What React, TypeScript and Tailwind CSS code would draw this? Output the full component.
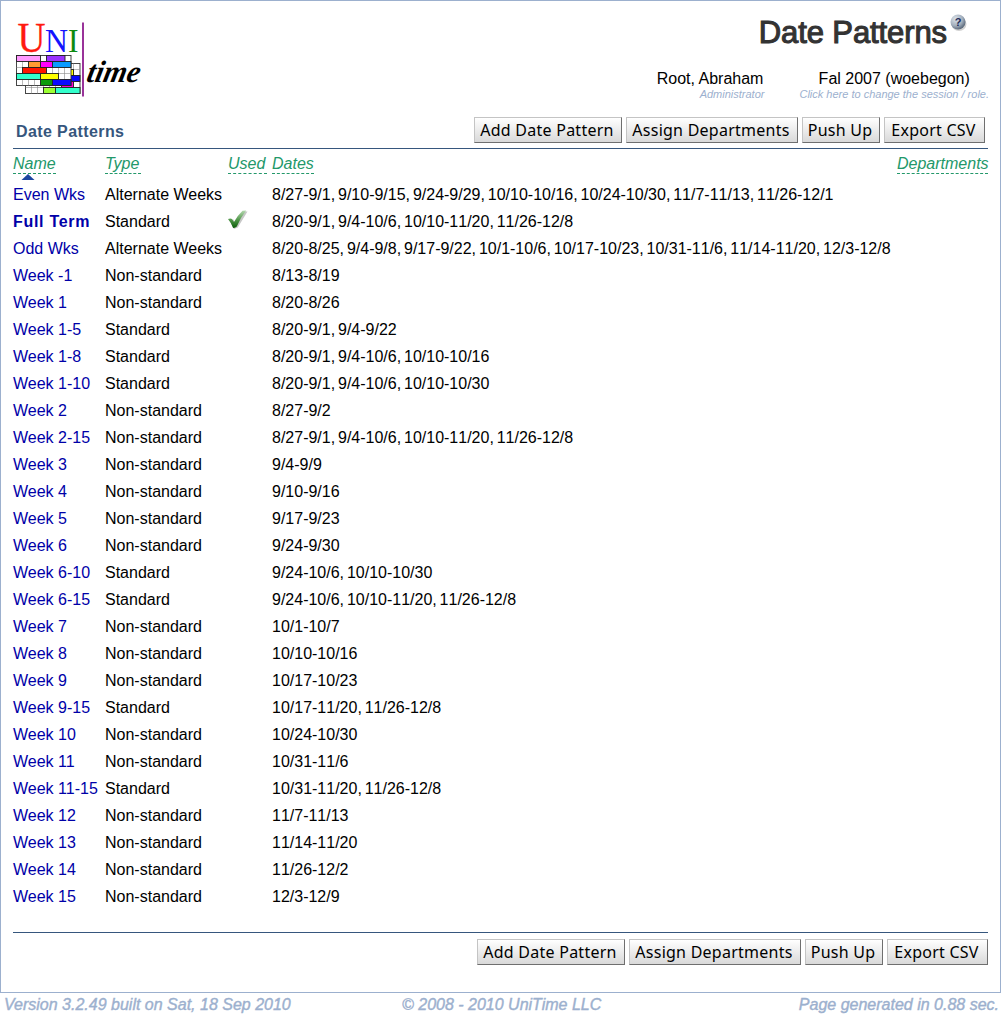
import React from "react";

type Row = [name: string, type: string, dates: string];

const NS = "Non-standard";
const ST = "Standard";
const ROWS: Row[] = [
  ["Even Wks", "Alternate Weeks", "8/27-9/1, 9/10-9/15, 9/24-9/29, 10/10-10/16, 10/24-10/30, 11/7-11/13, 11/26-12/1"],
  ["Full Term", ST, "8/20-9/1, 9/4-10/6, 10/10-11/20, 11/26-12/8"],
  ["Odd Wks", "Alternate Weeks", "8/20-8/25, 9/4-9/8, 9/17-9/22, 10/1-10/6, 10/17-10/23, 10/31-11/6, 11/14-11/20, 12/3-12/8"],
  ["Week -1", NS, "8/13-8/19"],
  ["Week 1", NS, "8/20-8/26"],
  ["Week 1-5", ST, "8/20-9/1, 9/4-9/22"],
  ["Week 1-8", ST, "8/20-9/1, 9/4-10/6, 10/10-10/16"],
  ["Week 1-10", ST, "8/20-9/1, 9/4-10/6, 10/10-10/30"],
  ["Week 2", NS, "8/27-9/2"],
  ["Week 2-15", NS, "8/27-9/1, 9/4-10/6, 10/10-11/20, 11/26-12/8"],
  ["Week 3", NS, "9/4-9/9"],
  ["Week 4", NS, "9/10-9/16"],
  ["Week 5", NS, "9/17-9/23"],
  ["Week 6", NS, "9/24-9/30"],
  ["Week 6-10", ST, "9/24-10/6, 10/10-10/30"],
  ["Week 6-15", ST, "9/24-10/6, 10/10-11/20, 11/26-12/8"],
  ["Week 7", NS, "10/1-10/7"],
  ["Week 8", NS, "10/10-10/16"],
  ["Week 9", NS, "10/17-10/23"],
  ["Week 9-15", ST, "10/17-11/20, 11/26-12/8"],
  ["Week 10", NS, "10/24-10/30"],
  ["Week 11", NS, "10/31-11/6"],
  ["Week 11-15", ST, "10/31-11/20, 11/26-12/8"],
  ["Week 12", NS, "11/7-11/13"],
  ["Week 13", NS, "11/14-11/20"],
  ["Week 14", NS, "11/26-12/2"],
  ["Week 15", NS, "12/3-12/9"],
];

/* x, y, width, height, fill */
type Block = [number, number, number, number, string];
const BACK_BLOCKS: Block[] = [
  [64, 69, 9, 6, "#ffff00"],
  [64, 75, 15.5, 6, "#0a0aff"],
  [61, 81, 12, 6, "#ff00d4"],
  [43, 87, 12, 6, "#9bff33"],
  [55, 87, 24.5, 6, "#33ffcc"],
];
const FRONT_BLOCKS: Block[] = [
  [16, 55, 24, 6, "#ff99ff"],
  [46, 55, 18.5, 6, "#9b33ff"],
  [28, 61, 12, 6, "#ff9b33"],
  [40, 61, 12, 6, "#ff00ff"],
  [52, 61, 18.5, 6, "#0a9bff"],
  [22, 67, 24, 6, "#ff1400"],
  [16, 73, 24, 6, "#33ffcc"],
  [40, 73, 18, 6, "#ffff00"],
  [40, 79, 12, 6, "#0a9b0a"],
  [52, 79, 18.5, 6, "#0a0aff"],
];

function Grid({ x, y, cols, rows }: { x: number; y: number; cols: number; rows: number }) {
  return (
    <g stroke="#8a8a8a" strokeWidth="0.6">
      <rect x={x} y={y} width={cols * 6 + 0.5} height={rows * 6} fill="#fff" stroke="#333" strokeWidth="0.9" />
      {Array.from({ length: cols - 1 }, (_, i) => (
        <path key={"c" + i} d={`M${x + 6 * (i + 1)} ${y}v${rows * 6}`} />
      ))}
      {Array.from({ length: rows - 1 }, (_, i) => (
        <path key={"r" + i} d={`M${x} ${y + 6 * (i + 1)}h${cols * 6}`} />
      ))}
    </g>
  );
}

function Logo() {
  const block = ([x, y, w, h, f]: Block, i: number) => (
    <rect key={i} x={x} y={y} width={w} height={h} fill={f} stroke="#222" strokeWidth="0.9" />
  );
  return (
    <svg width="134" height="98" viewBox="12.5 0.5 134 98" className="block" fontFamily="Liberation Serif, serif">
      <text x="17" y="51" fontSize="42" fill="#ff1a10" stroke="#ff1a10" strokeWidth="0.3" textLength="28" lengthAdjust="spacingAndGlyphs">U</text>
      <text x="44.5" y="51" fontSize="33" fill="#1414ff" textLength="23" lengthAdjust="spacingAndGlyphs">N</text>
      <text x="67.5" y="51" fontSize="33" fill="#0f8a0f" textLength="10.5" lengthAdjust="spacingAndGlyphs">I</text>
      <Grid x={25} y={63} cols={9} rows={5} />
      {BACK_BLOCKS.map(block)}
      <Grid x={16} y={55} cols={9} rows={5} />
      {FRONT_BLOCKS.map(block)}
      <path d="M82.500 22v74" stroke="#993399" strokeWidth="2" />
      <text transform="translate(85 81.500) skewX(-12)" fontSize="31" fontStyle="italic" fontWeight="bold" fill="#000" textLength="53" lengthAdjust="spacingAndGlyphs">time</text>
    </svg>
  );
}

function HelpIcon() {
  return (
    <svg width="18" height="18" viewBox="0 0 18 18" className="mt-px ml-[3px] block">
      <defs>
        <radialGradient id="ball" cx="0.35" cy="0.3" r="0.75">
          <stop offset="0" stopColor="#dde4ea" />
          <stop offset="0.6" stopColor="#a3afbd" />
          <stop offset="1" stopColor="#536173" />
        </radialGradient>
      </defs>
      <ellipse cx="9" cy="10" rx="7.500" ry="7" fill="#000" opacity="0.18" />
      <circle cx="8" cy="8" r="7.500" fill="url(#ball)" />
      <text x="8" y="11.500" fontSize="11" fontWeight="bold" textAnchor="middle" fill="#1d2b58" fontFamily="Liberation Sans, sans-serif">?</text>
    </svg>
  );
}

function Check() {
  return (
    <svg width="20" height="20" viewBox="0 0 20 20" className="block">
      <defs>
        <linearGradient id="tick" x1="0" y1="0" x2="0" y2="1">
          <stop offset="0" stopColor="#b5d8b0" />
          <stop offset="0.55" stopColor="#4f9648" />
          <stop offset="1" stopColor="#0b5c08" />
        </linearGradient>
      </defs>
      <path d="M1.500 10.500 5.500 9.500 7 13 17 1.500 19.500 1.500 9.800 17.500 6 19Z" fill="#000" opacity="0.22" />
      <path d="M0 9Q2.500 7.800 4 9L6 12Q10 5 14.500 0.800L18.200 0.500Q12.500 7.500 8.800 16.500Q7 18.200 5 17.800Q3 12.500 0 9Z" fill="url(#tick)" />
    </svg>
  );
}

function Buttons() {
  const base =
    "h-[26px] border border-t-[#c4c4c4] border-l-[#c4c4c4] border-r-[#6f6f6f] border-b-[#6f6f6f] bg-linear-to-b from-white to-[#d9d9d9] pr-[2px] text-center font-['Noto_Sans','Open_Sans',sans-serif] text-[16px] leading-[24px] text-black whitespace-nowrap tracking-[0.25px]";
  return (
    <div className="flex gap-1">
      <button className={base + " w-[148px]"}>Add Date Pattern</button>
      <button className={base + " w-[172px]"}>Assign Departments</button>
      <button className={base + " w-[78px]"}>Push Up</button>
      <button className={base + " w-[101px]"}>Export CSV</button>
    </div>
  );
}

const head = "border-b border-dashed border-[#23986a] h-[21px] leading-[22px]";

export default function App() {
  return (
    <div className="h-[1016px] w-[1001px] overflow-hidden bg-white font-['Liberation_Sans',Arial,sans-serif] text-[16px] text-black">
      <div className="flex h-[993px] flex-col border border-[#9cb0ce] pr-3 pl-3">
        <header className="flex h-[107px] justify-between">
          <Logo />
          <div className="flex flex-col items-end">
            <div className="flex h-[68px] items-start pt-[12px] pr-[20px]">
              <h1 className="mt-[2px] text-[31px] leading-9 tracking-[-0.1px] text-[#333] [-webkit-text-stroke:1.1px_#333]">Date Patterns</h1>
              <HelpIcon />
            </div>
            <div className="-mr-px flex gap-[35px]">
              <div className="text-right">
                <div className="pr-px leading-[19px]">Root, Abraham</div>
                <div className="text-[11px] leading-[13px] text-[#9cb0ce] italic">Administrator</div>
              </div>
              <div className="text-center">
                <div className="leading-[19px]">Fal 2007 (woebegon)</div>
                <div className="text-[11px] leading-[13px] text-[#9cb0ce] italic">Click here to change the session / role.</div>
              </div>
            </div>
          </div>
        </header>

        <div className="flex h-[41px] w-[975px] items-start justify-between border-b border-[#36567d] pt-[9px] pr-[3px] pl-[3px]">
          <h2 className="text-[16px] leading-[29px] font-bold tracking-[0.4px] text-[#36567d]">Date Patterns</h2>
          <Buttons />
        </div>

        <div className="flex h-8 w-[975px] pt-1 text-[#23986a] italic">
          <div className="w-[92px]">
            <div className={head + " w-[43px]"}>Name</div>
            <svg width="14" height="6" viewBox="0 0 14 6" className="ml-2 block">
              <path d="M0.500 6 7 0l6.500 6Z" fill="#1d46a0" />
            </svg>
          </div>
          <div className="w-[123px]"><div className={head + " w-9"}>Type</div></div>
          <div className="w-[44px]"><div className={head + " w-[39px]"}>Used</div></div>
          <div className="flex-1"><div className={head + " w-[42px]"}>Dates</div></div>
          <div className={head + " w-[91px]"}>Departments</div>
        </div>

        <main>
          {ROWS.map(([name, type, dates]) => (
            <div key={name} className="flex h-[27px] leading-[27px] whitespace-nowrap">
              <div className={"w-[92px] text-[#0000a8] " + (name === "Full Term" ? "font-bold tracking-[0.7px]" : "")}>{name}</div>
              <div className="w-[123px]">{type}</div>
              <div className="w-[44px] pt-[2px]">{name === "Full Term" && <Check />}</div>
              <div className="[font-kerning:none] [word-spacing:-1.6px]">{dates}</div>
            </div>
          ))}
        </main>

        <div className="mt-[22px] flex w-[975px] justify-end border-t border-[#36567d] pt-[6px]">
          <Buttons />
        </div>
      </div>
      <footer className="grid h-[23px] grid-cols-[398px_1fr_auto] pr-[2px] pl-1 leading-[23px] text-[#9cb0ce] italic [-webkit-text-stroke:0.4px_#9cb0ce]">
        <span>Version 3.2.49 built on Sat, 18 Sep 2010</span>
        <span>© 2008 - 2010 UniTime LLC</span>
        <span>Page generated in 0.88 sec.</span>
      </footer>
    </div>
  );
}
